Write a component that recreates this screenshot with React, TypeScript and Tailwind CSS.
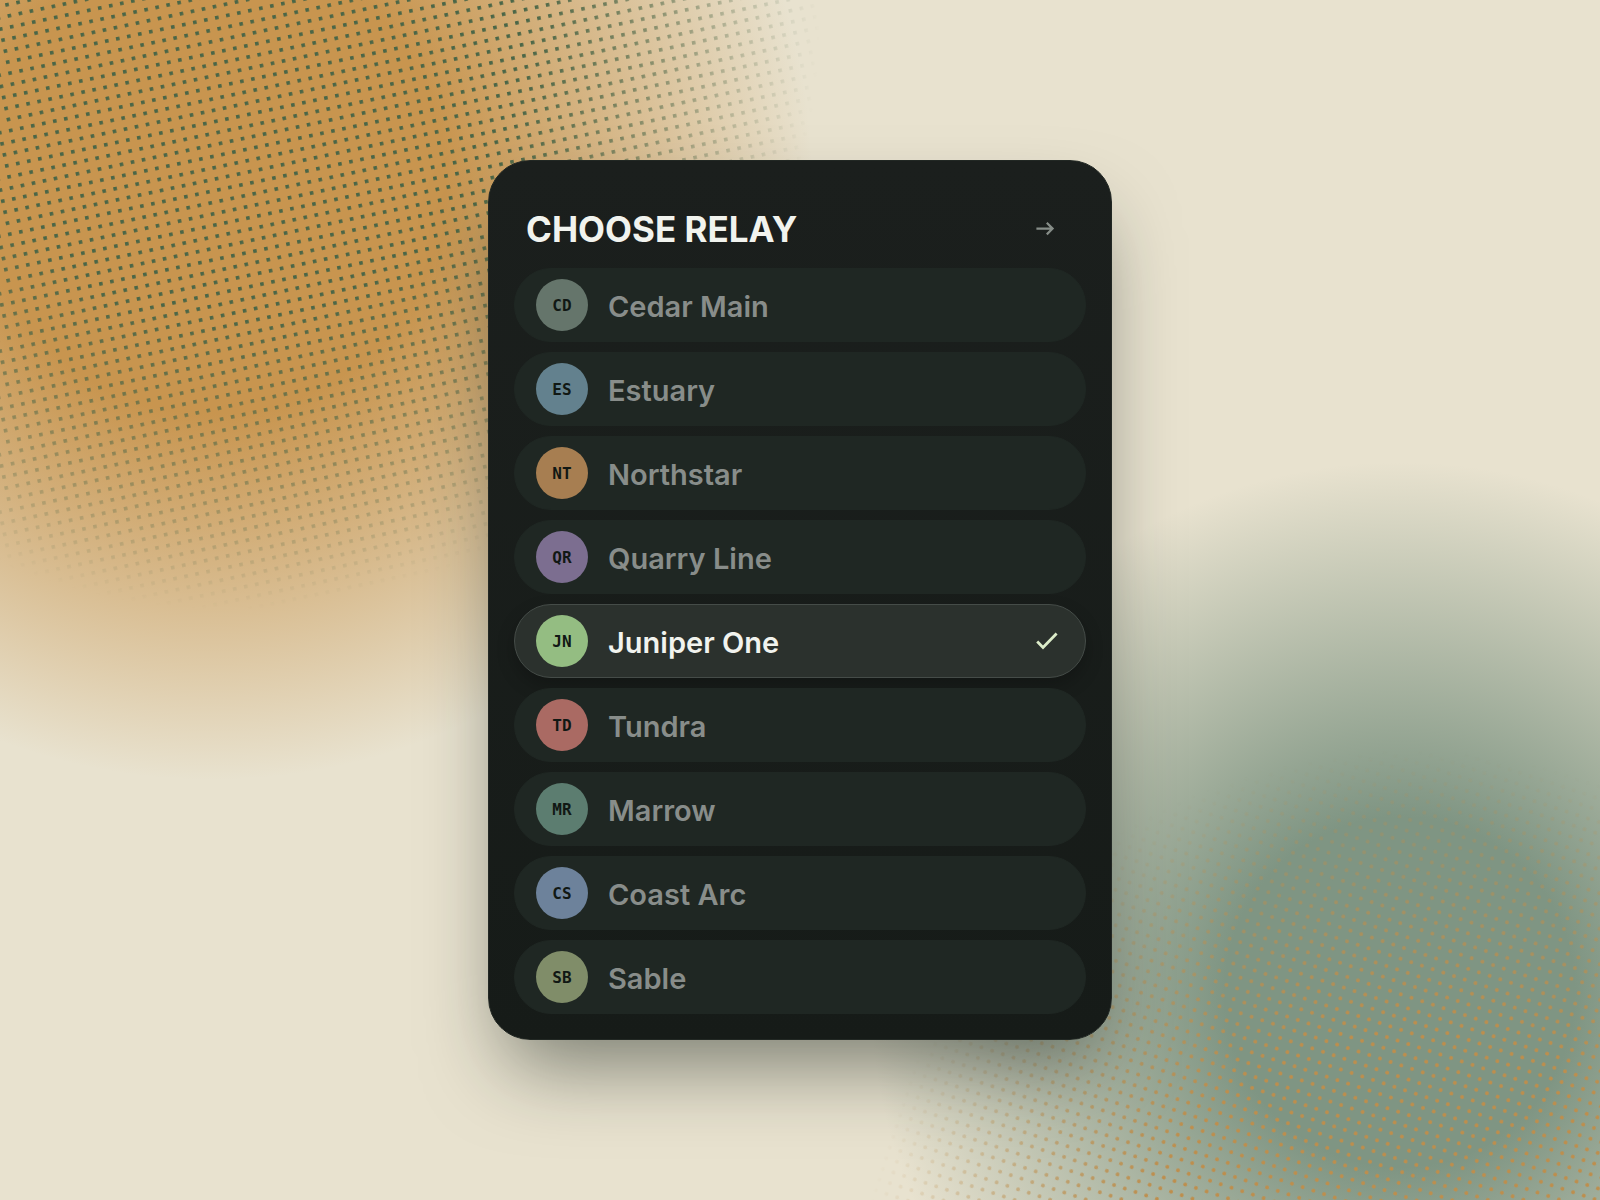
import React, { useState } from 'react';

interface Relay {
  code: string;
  name: string;
  color: string;
}

const relays: Relay[] = [
  { code: 'CD', name: 'Cedar Main', color: 'bg-[#65756b]' },
  { code: 'ES', name: 'Estuary', color: 'bg-[#63818e]' },
  { code: 'NT', name: 'Northstar', color: 'bg-[#a77e51]' },
  { code: 'QR', name: 'Quarry Line', color: 'bg-[#7c6e90]' },
  { code: 'JN', name: 'Juniper One', color: 'bg-[#94bd82]' },
  { code: 'TD', name: 'Tundra', color: 'bg-[#aa6a63]' },
  { code: 'MR', name: 'Marrow', color: 'bg-[#5c7d70]' },
  { code: 'CS', name: 'Coast Arc', color: 'bg-[#6d829b]' },
  { code: 'SB', name: 'Sable', color: 'bg-[#808d69]' },
];

const Backdrop: React.FC = () => (
  <svg
    className="absolute inset-0 h-full w-full"
    viewBox="0 0 1600 1200"
    preserveAspectRatio="xMidYMid slice"
    aria-hidden="true"
  >
    <defs>
      <radialGradient id="amber" gradientUnits="userSpaceOnUse" cx="212" cy="180" r="600">
        <stop offset="0.39" stopColor="#c8954f" />
        <stop offset="1" stopColor="#c8954f" stopOpacity="0" />
      </radialGradient>
      <radialGradient id="moss" gradientUnits="userSpaceOnUse" cx="1400" cy="992" r="530">
        <stop offset="0.33" stopColor="#7f9583" />
        <stop offset="1" stopColor="#7f9583" stopOpacity="0" />
      </radialGradient>
      <pattern
        id="pine-dots"
        width="11.25"
        height="11.25"
        patternUnits="userSpaceOnUse"
        patternTransform="translate(4.9 3.3) rotate(-12)"
      >
        <rect width="3.6" height="3.6" fill="#4a6647" />
      </pattern>
      <pattern
        id="amber-dots"
        width="11.25"
        height="11.25"
        patternUnits="userSpaceOnUse"
        patternTransform="translate(1306.7 949.8) rotate(18)"
      >
        <circle cx="2" cy="2" r="1.9" fill="#be8e4c" />
      </pattern>
      <radialGradient id="pine-fade" gradientUnits="userSpaceOnUse" cx="230" cy="20" r="590">
        <stop offset="0.5" stopColor="#fff" />
        <stop offset="1" stopColor="#fff" stopOpacity="0" />
      </radialGradient>
      <radialGradient id="amber-fade" gradientUnits="userSpaceOnUse" cx="1410" cy="1300" r="550">
        <stop offset="0.5" stopColor="#fff" />
        <stop offset="1" stopColor="#fff" stopOpacity="0" />
      </radialGradient>
      <mask id="pine-mask" maskUnits="userSpaceOnUse" x="0" y="0" width="1600" height="1200">
        <rect width="1600" height="1200" fill="url(#pine-fade)" />
      </mask>
      <mask id="amber-mask" maskUnits="userSpaceOnUse" x="0" y="0" width="1600" height="1200">
        <rect width="1600" height="1200" fill="url(#amber-fade)" />
      </mask>
    </defs>
    <rect width="1600" height="1200" fill="#e8e2cf" />
    <rect width="1600" height="1200" fill="url(#amber)" />
    <rect width="1600" height="1200" fill="url(#moss)" />
    <rect width="1600" height="1200" fill="url(#pine-dots)" mask="url(#pine-mask)" />
    <rect width="1600" height="1200" fill="url(#amber-dots)" mask="url(#amber-mask)" />
  </svg>
);

const ArrowIcon: React.FC = () => (
  <svg className="h-6 w-6" viewBox="0 0 24 24" fill="none" stroke="currentColor" strokeWidth="2.2" aria-hidden="true">
    <path d="M2.4 11.6H19M12.8 5.8 18.6 11.6 12.8 17.4" />
  </svg>
);

const CheckMark: React.FC = () => (
  <svg className="h-6 w-6" viewBox="0 0 24 24" fill="none" stroke="#dcecc9" strokeWidth="2.8" aria-hidden="true">
    <path d="M2.2 12.6 8 18.4 21.6 4.6" />
  </svg>
);

interface RelayRowProps {
  relay: Relay;
  selected: boolean;
  onSelect: () => void;
}

const RelayRow: React.FC<RelayRowProps> = ({ relay, selected, onSelect }) => (
  <li>
    <button
      type="button"
      aria-pressed={selected}
      onClick={onSelect}
      className={`flex h-[74px] w-full items-center rounded-full border pr-[26px] pl-[21px] text-left ${
        selected
          ? 'border-[#454c48] bg-[#2b312d] text-[#f1f3ee] shadow-[0_8px_18px_rgba(0,0,0,0.22)]'
          : 'border-[#1f2723] bg-[#1f2723] text-[#888d8a]'
      }`}
    >
      <span
        className={`flex h-[52px] w-[52px] shrink-0 items-center justify-center rounded-full pt-px font-['DejaVu_Sans_Mono',monospace] text-base font-bold text-[#111814] ${relay.color}`}
      >
        {relay.code}
      </span>
      <span className="ml-5 flex-1 truncate pt-1 text-[29px] leading-10 font-semibold">{relay.name}</span>
      {selected && <CheckMark />}
    </button>
  </li>
);

const App: React.FC = () => {
  const [selectedCode, setSelectedCode] = useState('JN');

  return (
    <main className="relative flex min-h-screen items-center justify-center overflow-hidden bg-[#e8e2cf] font-['Inter',sans-serif]">
      <Backdrop />
      <section className="relative w-full max-w-[624px] rounded-[42px] border border-[#222824] bg-linear-to-b from-[#1b1f1d] to-[#161b18] px-[25px] pt-[41px] pb-[25px] shadow-[0_42px_80px_-18px_rgba(20,30,24,0.52)]">
        <header className="flex items-center justify-between pr-7 pb-3 pl-3">
          <h1 className="text-[35px] leading-[54px] font-bold text-[#f1f3ee]">CHOOSE RELAY</h1>
          <button type="button" aria-label="Next" className="text-[#868d88]">
            <ArrowIcon />
          </button>
        </header>
        <ul className="flex flex-col gap-2.5">
          {relays.map((relay) => (
            <RelayRow
              key={relay.code}
              relay={relay}
              selected={relay.code === selectedCode}
              onSelect={() => setSelectedCode(relay.code)}
            />
          ))}
        </ul>
      </section>
    </main>
  );
};

export default App;
